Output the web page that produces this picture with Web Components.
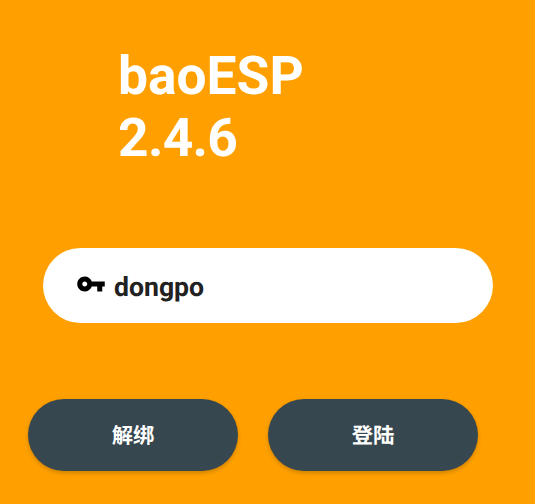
<!DOCTYPE html>
<html>
<head>
<meta charset="utf-8">
<style>
  html, body { margin: 0; padding: 0; height: 100%; overflow: hidden; background: #ffa000; }
</style>
</head>
<body>
<template id="login-tpl">
  <style>
    :host {
      display: flex;
      flex-direction: column;
      width: 535px;
      height: 504px;
      box-sizing: border-box;
      background: #ffa000;
      font-family: Roboto, "Noto Sans CJK SC", sans-serif;
      text-rendering: geometricPrecision;
    }
    .title {
      margin: 0;
      padding: 46px 0 0 118px;
      color: #fff;
      font-size: 53.3px;
      font-weight: 700;
      line-height: 62px;
    }
    .version { letter-spacing: -0.7px; }
    .field { margin: 78px 0 0 43px; }
    .actions {
      display: flex;
      gap: 30px;
      margin: 76px 0 0 28px;
    }
  </style>
  <h1 class="title">baoESP<br><span class="version">2.4.6</span></h1>
  <div class="field"><slot name="field"></slot></div>
  <div class="actions"><slot name="actions"></slot></div>
</template>

<template id="key-tpl">
  <style>
    :host {
      display: flex;
      align-items: center;
      gap: 8px;
      width: 450px;
      height: 75px;
      box-sizing: border-box;
      padding: 0 0 0 33px;
      background: #fff;
      border-radius: 38px;
      color: #212121;
      font-size: 26.6px;
      font-weight: 700;
    }
    svg { width: 30px; height: 30px; margin-top: -4px; flex: none; }
    span { padding-top: 4px; }
  </style>
  <svg viewBox="0 0 24 24"><path fill="#000" d="M12.65 10C11.83 7.67 9.61 6 7 6c-3.31 0-6 2.69-6 6s2.69 6 6 6c2.61 0 4.83-1.67 5.65-4H17v4h4v-4h2v-4H12.65zM7 14c-1.1 0-2-.9-2-2s.9-2 2-2 2 .9 2 2-.9 2-2 2z"/></svg>
  <span><slot></slot></span>
</template>

<template id="btn-tpl">
  <style>
    :host {
      display: flex;
      align-items: center;
      justify-content: center;
      width: 210px;
      height: 72px;
      background: #37474f;
      border-radius: 36px;
      color: #fff;
      font-size: 21.3px;
      font-weight: 700;
      box-shadow: 0 2px 4px rgba(0,0,0,.2);
    }
    span { padding-bottom: 2px; }
  </style>
  <span><slot></slot></span>
</template>

<login-screen>
  <key-field slot="field">dongpo</key-field>
  <pill-button slot="actions">解绑</pill-button>
  <pill-button slot="actions">登陆</pill-button>
</login-screen>

<script>
  function define(name, tplId) {
    customElements.define(name, class extends HTMLElement {
      constructor() {
        super();
        this.attachShadow({ mode: 'open' });
        this.shadowRoot.appendChild(document.getElementById(tplId).content.cloneNode(true));
      }
    });
  }
  define('login-screen', 'login-tpl');
  define('key-field', 'key-tpl');
  define('pill-button', 'btn-tpl');
</script>
</body>
</html>
